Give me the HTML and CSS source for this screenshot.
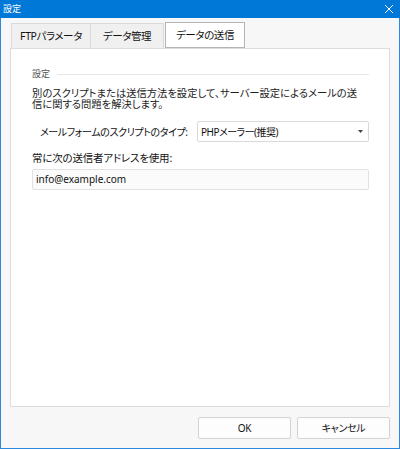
FILE: index.html
```html
<!DOCTYPE html>
<html lang="ja">
<head>
<meta charset="utf-8">
<link rel="stylesheet" href="styles.css">
</head>
<body>
<div class="window">
  <div class="titlebar">
    <span class="title">設定</span>
    <svg class="close" width="10" height="10" viewBox="0 0 10 10"><path d="M1 1 L9 9 M9 1 L1 9" stroke="#fff" stroke-width="1" fill="none"/></svg>
  </div>
  <div class="content">
    <div class="tabs">
      <div class="tab t1">FTPパラメータ</div>
      <div class="tab t2">データ管理</div>
      <div class="tab active">データの送信</div>
    </div>
    <div class="panel">
      <div class="group-head">
        <span class="group-label">設定</span>
        <span class="group-line"></span>
      </div>
      <p class="desc"><span>別のスクリプトまたは送信方法を設定して、サーバー設定によるメールの送</span><span>信に関する問題を解決します。</span></p>
      <div class="row">
        <span class="row-label">メールフォームのスクリプトのタイプ:</span>
        <div class="select">
          <span>PHPメーラー(推奨)</span>
          <svg class="arrow" width="5" height="3" viewBox="0 0 5 3"><path d="M0 0 H5 L2.5 3 Z" fill="#444"/></svg>
        </div>
      </div>
      <div class="label2">常に次の送信者アドレスを使用:</div>
      <div class="input">info@example.com</div>
    </div>
    <div class="footer">
      <div class="btn">OK</div>
      <div class="btn">キャンセル</div>
    </div>
  </div>
</div>
</body>
</html>
```
FILE: styles.css
```css
html, body {
  margin: 0;
  padding: 0;
}
body {
  width: 400px;
  height: 449px;
  font-family: "Noto Sans", "Noto Sans CJK JP", sans-serif;
  font-feature-settings: "palt";
  color: #111;
  overflow: hidden;
}
.window {
  box-sizing: border-box;
  width: 400px;
  height: 449px;
  background: #f7f7f7;
  border: 1px solid #2b8ae0;
  border-top: none;
  display: flex;
  flex-direction: column;
}
.titlebar {
  height: 18px;
  margin: 0 -1px;
  background: #0078d7;
  display: flex;
  align-items: center;
  justify-content: space-between;
  padding: 0 6px 0 3px;
  flex: none;
}
.title {
  color: #fff;
  font-size: 9px;
  line-height: 18px;
}
.close {
  display: block;
}
.content {
  padding: 4px 9px 0 9px;
  flex: 1;
  display: flex;
  flex-direction: column;
}
.tabs {
  display: flex;
  align-items: flex-end;
  height: 26px;
  padding-left: 1px;
}
.tab {
  box-sizing: border-box;
  height: 25px;
  border: 1px solid #dadada;
  border-bottom: none;
  background: #f0f0f0;
  font-size: 10.5px;
  letter-spacing: -0.4px;
  line-height: 24px;
  text-align: center;
  color: #111;
}
.t1 { width: 80px; }
.t2 { width: 73px; border-left: none; }
.tab.active {
  width: 80px;
  height: 26px;
  margin-left: 1px;
  background: #fff;
  border: 1px solid #b4b4b4;
  line-height: 24px;
}
.panel {
  box-sizing: border-box;
  height: 359px;
  background: #fff;
  border: 1px solid #dcdcdc;
  padding: 19px 20px 0 21px;
}
.group-head {
  display: flex;
  align-items: center;
  height: 12px;
}
.group-label {
  font-size: 9px;
  line-height: 12px;
  color: #555;
  margin-right: 7px;
}
.group-line {
  flex: 1;
  height: 1px;
  background: #e6e6e6;
}
.desc {
  margin: 8px 0 0;
  font-size: 10.3px;
  line-height: 11px;
  color: #222;
}
.desc span {
  display: block;
  white-space: nowrap;
}
.row {
  display: flex;
  align-items: center;
  margin-top: 11px;
  height: 20px;
}
.row-label {
  font-size: 10px;
  letter-spacing: -0.4px;
  padding-left: 8px;
  width: 157px;
  flex: none;
  white-space: nowrap;
}
.select {
  box-sizing: border-box;
  flex: 1;
  height: 21px;
  border: 1px solid #d9d9d9;
  border-radius: 2px;
  background: #fff;
  display: flex;
  align-items: center;
  justify-content: space-between;
  padding: 0 5px 0 3px;
  font-size: 10px;
  letter-spacing: -0.5px;
}
.arrow {
  display: block;
}
.label2 {
  margin-top: 10px;
  font-size: 10.5px;
  letter-spacing: -0.2px;
  line-height: 14px;
}
.input {
  box-sizing: border-box;
  margin-top: 4px;
  height: 21px;
  border: 1px solid #e2e2e2;
  border-radius: 2px;
  background: #fbfbfb;
  font-size: 10px;
  line-height: 19px;
  padding-left: 3px;
}
.footer {
  display: flex;
  justify-content: flex-end;
  gap: 6px;
  margin-top: 10px;
}
.btn {
  box-sizing: border-box;
  width: 93px;
  height: 22px;
  border: 1px solid #d3d3d3;
  border-radius: 2px;
  background: #fdfdfd;
  font-size: 10px;
  letter-spacing: -0.3px;
  line-height: 20px;
  text-align: center;
}
```
